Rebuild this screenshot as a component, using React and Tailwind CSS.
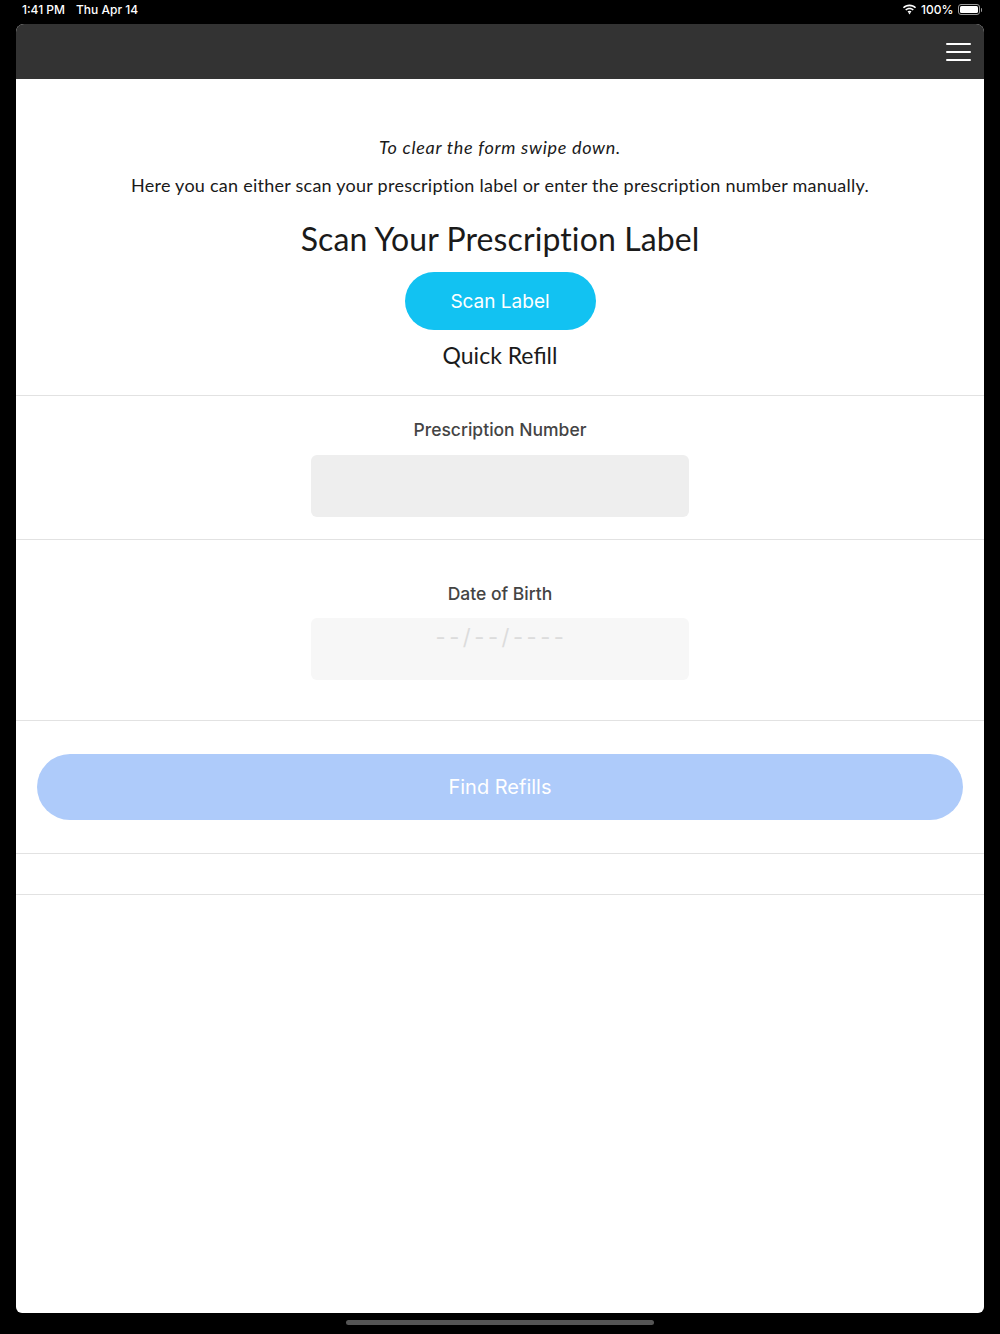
import React from "react";

function Wifi() {
  return (
    <svg width="15" height="11" viewBox="0 0 15 11" fill="white">
      <path d="M7.5 2.2c2.1 0 4 .8 5.5 2.1l1.1-1.1C12.3 1.5 10 .6 7.5.6S2.7 1.5.9 3.2L2 4.3c1.5-1.3 3.4-2.1 5.5-2.1z" />
      <path d="M7.5 5.3c1.2 0 2.3.4 3.2 1.2l1.1-1.1C10.6 4.4 9.1 3.8 7.5 3.8S4.4 4.4 3.2 5.4l1.1 1.1c.9-.8 2-1.2 3.2-1.2z" />
      <path d="M7.5 8.3c.4 0 .8.1 1.1.4L7.5 10.5 6.4 8.7c.3-.3.7-.4 1.1-.4z" />
      <path d="M7.5 6.8c.8 0 1.5.3 2 .8L8.4 8.7c-.3-.2-.6-.4-.9-.4s-.6.1-.9.4L5.5 7.6c.5-.5 1.2-.8 2-.8z" />
    </svg>
  );
}

function Battery() {
  return (
    <div className="flex items-center">
      <div className="w-[22px] h-[11px] rounded-[3px] border border-[#9a9a9a] p-[1px]">
        <div className="w-full h-full bg-white rounded-[1.5px]" />
      </div>
      <div className="w-[1.5px] h-[4px] bg-[#9a9a9a] rounded-r-sm ml-[1px]" />
    </div>
  );
}

export default function App() {
  const raleway = { fontFamily: "Lato, 'Open Sans', sans-serif" };
  return (
    <div className="w-[1000px] h-[1334px] bg-black flex flex-col overflow-hidden" style={{ fontFamily: "Inter, 'Noto Sans', sans-serif" }}>
      {/* status bar */}
      <div className="h-[24px] flex items-center justify-between px-[22px] text-white text-[12px] font-medium shrink-0">
        <div className="flex gap-[11px] -mt-[5px]">
          <span>1:41 PM</span>
          <span>Thu Apr 14</span>
        </div>
        <div className="flex items-center gap-[4px] -mt-[5px] mr-[-4px]">
          <Wifi />
          <span>100%</span>
          <Battery />
        </div>
      </div>

      {/* app card */}
      <div className="mx-[16px] h-[1289px] bg-white rounded-t-[8px] rounded-b-[6px] overflow-hidden flex flex-col">
        <div className="h-[55px] bg-[#333333] flex items-center justify-end pr-[13px] shrink-0">
          <div className="flex flex-col gap-[6px] w-[25px]">
            <div className="h-[2px] bg-white rounded" />
            <div className="h-[2px] bg-white rounded" />
            <div className="h-[2px] bg-white rounded" />
          </div>
        </div>

        <div className="flex flex-col items-center pt-[56px] pb-[26px] border-b border-[#e2e2e2] text-[#1a1a1a]" style={raleway}>
          <p className="italic text-[18px] leading-[24px] tracking-[0.7px]">To clear the form swipe down.</p>
          <p className="text-[18px] leading-[24px] mt-[14px] tracking-[0.25px]">Here you can either scan your prescription label or enter the prescription number manually.</p>
          <h1 className="text-[32px] leading-[38px] mt-[23px] tracking-[0.1px]">Scan Your Prescription Label</h1>
          <button className="mt-[14px] w-[191px] h-[58px] rounded-full bg-[#12c2f2] text-white text-[19px] pt-[2px]" style={{ fontFamily: "Inter, sans-serif" }}>Scan Label</button>
          <p className="text-[23px] leading-[28px] mt-[11px]">Quick Refill</p>
        </div>

        <div className="flex flex-col items-center pt-[22px] pb-[22px] border-b border-[#e2e2e2]">
          <label className="text-[17.5px] leading-[24px] text-[#444] font-medium">Prescription Number</label>
          <div className="mt-[13px] w-[378px] h-[62px] bg-[#eeeeee] rounded-[6px]" />
        </div>

        <div className="flex flex-col items-center pt-[42px] pb-[40px] border-b border-[#e2e2e2]">
          <label className="text-[17.5px] leading-[24px] text-[#444] font-medium">Date of Birth</label>
          <div className="mt-[12px] w-[378px] h-[62px] bg-[#f7f7f7] rounded-[6px] flex justify-center pt-[5px]">
            <span className="text-[22px] leading-[28px] text-[#dcdcdc] tracking-[3.5px] ml-[3px]">--/--/----</span>
          </div>
        </div>

        <div className="px-[21px] pt-[33px] pb-[33px] border-b border-[#e2e2e2]">
          <button className="w-full h-[66px] rounded-full bg-[#aecbfa] text-white text-[20px]">Find Refills</button>
        </div>
        <div className="h-[41px] border-b border-[#e2e2e2]" />
      </div>

      <div className="flex justify-center pt-[7px]">
        <div className="w-[308px] h-[5px] rounded-full bg-[#555]" />
      </div>
    </div>
  );
}
